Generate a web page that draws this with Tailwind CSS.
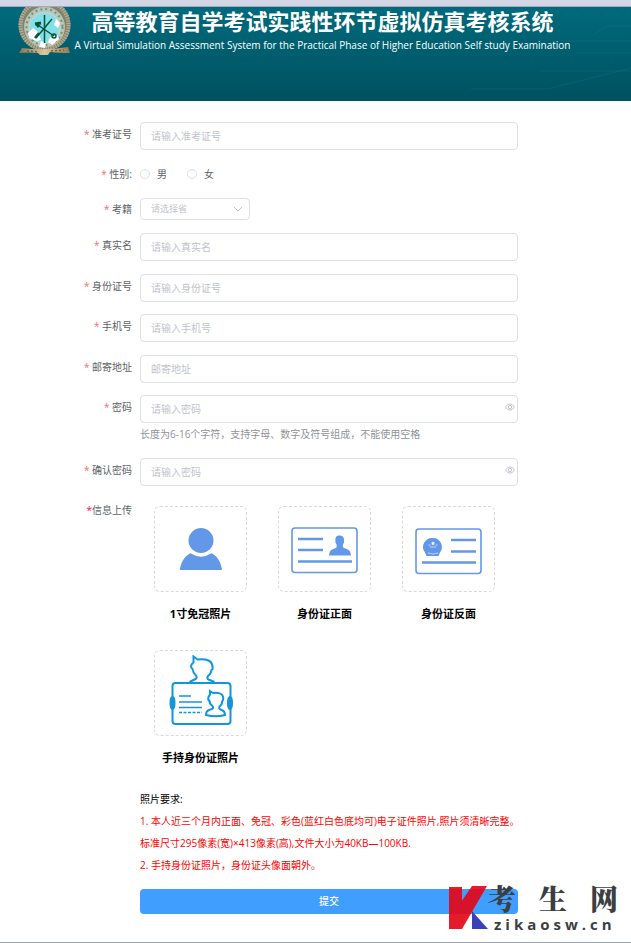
<!doctype html>
<html lang="zh-CN">

<head>
    <title>高等教育自学考试实践性环节虚拟仿真考核系统</title>
    <meta charset="utf-8">
    <meta name="viewport" content="width=device-width, initial-scale=1">
    <script src="https://cdn.jsdelivr.net/npm/@tailwindcss/browser@4"></script>
</head>

<body class="relative bg-white font-['Open_Sans','Noto_Sans_CJK_SC',sans-serif] text-[10px] text-[#606266]">

<div class="h-[7px] border-b border-[#a5a8ba] bg-[#d3d6e5]"></div>

<header class="relative h-[94px] overflow-hidden bg-linear-to-b from-[#006a7c] to-[#00515f] text-white">
    <!-- faint circuit lines -->
    <svg class="absolute top-0 right-0" width="180" height="94" viewBox="0 0 180 94" fill="none" stroke="#1b8294" stroke-opacity=".25">
        <path d="M20 82H96L180 61M90 64H180M110 34H180M125 46H180M142 28l14-9h24"/>
        <path d="M60 55H180M85 8H180" stroke-dasharray="2 8"/>
    </svg>
    <!-- emblem -->
    <svg class="absolute top-0 left-[18px]" width="54" height="49" viewBox="0 0 54 49">
        <defs>
            <linearGradient id="gold" x1="0" y1="0" x2="1" y2="0">
                <stop offset="0" stop-color="#8a7350"/>
                <stop offset=".5" stop-color="#dcc7a2"/>
                <stop offset="1" stop-color="#94774f"/>
            </linearGradient>
        </defs>
        <circle cx="26.500" cy="18" r="26" fill="#7f8370"/>
        <circle cx="26.500" cy="18" r="24" fill="none" stroke="#b3ab8e" stroke-width="4" stroke-dasharray="1.500 1"/>
        <circle cx="26.500" cy="20" r="20" fill="#b4c9c0" stroke="#c9bc98"/>
        <circle cx="26.500" cy="20" r="18" fill="none" stroke="#6b918a" stroke-width="2" stroke-dasharray="2 3"/>
        <circle cx="26.500" cy="21" r="15.500" fill="#82e0ea" stroke="#d9d5b8"/>
        <path d="M10 26l5-5 5 4 3 8-4 1-8-3zM32 30l8-2 1 4-7 6-4-3zM23 34l5 2-1 5-6-1zM38 12l4 4-2 5-4-3z" fill="#fff"/>
        <g stroke="#0b5536" fill="none">
            <path d="M26.500 8v28" stroke-width="1.500"/>
            <path d="M34 12L18 31M20 18l16 11" stroke-width="1.500"/>
            <path d="M17 17l6-1M18 16l3 4" stroke-width="3"/>
            <path d="M21 26l-4 5" stroke-width="2.500"/>
            <circle cx="36" cy="29" r="2" stroke-width="1.500"/>
        </g>
        <path d="M4 41q22 3 46-1l2 6q-8 0-20-1l-2 3h-8l-2-2q-10-1-19 0z" fill="url(#gold)"/>
        <path d="M9 44l12 1M33 44l13-1" stroke="#7b5c38" stroke-width="1.500" stroke-dasharray="2 2"/>
    </svg>
    <div class="pl-[14px] text-center">
        <h1 class="text-[22px] leading-7 font-bold">高等教育自学考试实践性环节虚拟仿真考核系统</h1>
        <p class="text-[10px] leading-5 font-medium whitespace-nowrap">A Virtual Simulation Assessment System for the Practical Phase of Higher Education Self study Examination</p>
    </div>
</header>

<form class="border-b border-[#9ba3ad] pt-[21px] pr-[113px] pb-7 pl-[72px]">
    <div class="mb-3 flex">
        <label for="ticket" class="w-[60px] shrink-0 text-right leading-6"><span class="text-[#f56c6c]">*</span> 准考证号</label>
        <input id="ticket" type="text" placeholder="请输入准考证号" class="ml-2 h-7 min-w-0 flex-1 rounded-sm border border-[#dcdfe6] px-[10px] placeholder:text-[#c0c4cc]">
    </div>

    <div class="mb-3 flex leading-6" role="radiogroup" aria-labelledby="gender">
        <span id="gender" class="w-[60px] shrink-0 text-right"><span class="text-[#f56c6c]">*</span> 性别:</span>
        <label class="ml-2 flex items-center gap-[7px]"><input type="radio" name="gender" class="size-[10px] appearance-none rounded-full border border-[#dcdfe6] checked:bg-[#409eff]">男</label>
        <label class="ml-5 flex items-center gap-[7px]"><input type="radio" name="gender" class="size-[10px] appearance-none rounded-full border border-[#dcdfe6] checked:bg-[#409eff]">女</label>
    </div>

    <div class="mb-[13px] flex">
        <label for="province" class="w-[60px] shrink-0 text-right leading-[22px]"><span class="text-[#f56c6c]">*</span> 考籍</label>
        <div class="relative ml-2 w-[110px]">
            <select id="province" class="block h-[22px] w-full appearance-none rounded-sm border border-[#dcdfe6] px-[10px] text-[9px] text-[#c0c4cc]">
                <option>请选择省</option>
            </select>
            <svg class="pointer-events-none absolute top-[7px] right-2" width="8" height="8" viewBox="0 0 8 8" fill="none" stroke="#c0c4cc"><path d="M0 2l4 4 4-4"/></svg>
        </div>
    </div>

    <div class="mb-[13px] flex">
        <label for="name" class="w-[60px] shrink-0 text-right leading-6"><span class="text-[#f56c6c]">*</span> 真实名</label>
        <input id="name" type="text" placeholder="请输入真实名" class="ml-2 h-7 min-w-0 flex-1 rounded-sm border border-[#dcdfe6] px-[10px] placeholder:text-[#c0c4cc]">
    </div>

    <div class="mb-3 flex">
        <label for="idcard" class="w-[60px] shrink-0 text-right leading-6"><span class="text-[#f56c6c]">*</span> 身份证号</label>
        <input id="idcard" type="text" placeholder="请输入身份证号" class="ml-2 h-7 min-w-0 flex-1 rounded-sm border border-[#dcdfe6] px-[10px] placeholder:text-[#c0c4cc]">
    </div>

    <div class="mb-[13px] flex">
        <label for="phone" class="w-[60px] shrink-0 text-right leading-6"><span class="text-[#f56c6c]">*</span> 手机号</label>
        <input id="phone" type="tel" placeholder="请输入手机号" class="ml-2 h-7 min-w-0 flex-1 rounded-sm border border-[#dcdfe6] px-[10px] placeholder:text-[#c0c4cc]">
    </div>

    <div class="mb-3 flex">
        <label for="address" class="w-[60px] shrink-0 text-right leading-6"><span class="text-[#f56c6c]">*</span> 邮寄地址</label>
        <input id="address" type="text" placeholder="邮寄地址" class="ml-2 h-7 min-w-0 flex-1 rounded-sm border border-[#dcdfe6] px-[10px] placeholder:text-[#c0c4cc]">
    </div>

    <div class="mb-[13px] flex">
        <label for="password" class="w-[60px] shrink-0 text-right leading-6"><span class="text-[#f56c6c]">*</span> 密码</label>
        <div class="relative ml-2 flex-1">
            <input id="password" type="password" placeholder="请输入密码" class="block h-7 w-full rounded-sm border border-[#dcdfe6] px-[10px] placeholder:text-[#c0c4cc]">
            <button type="button" aria-label="显示密码" class="absolute top-[7px] right-[3px]">
                <svg width="10" height="10" viewBox="0 0 10 10" fill="none" stroke="#c0c4cc"><path d="M.5 5Q2.500 1.800 5 1.800T9.500 5Q7.500 8.200 5 8.200T.5 5z"/><circle cx="5" cy="5" r="1.700"/></svg>
            </button>
            <p class="leading-[22px] text-[#909399]">长度为6-16个字符，支持字母、数字及符号组成，不能使用空格</p>
        </div>
    </div>

    <div class="mb-3 flex">
        <label for="confirm" class="w-[60px] shrink-0 text-right leading-6"><span class="text-[#f56c6c]">*</span> 确认密码</label>
        <div class="relative ml-2 flex-1">
            <input id="confirm" type="password" placeholder="请输入密码" class="block h-7 w-full rounded-sm border border-[#dcdfe6] px-[10px] placeholder:text-[#c0c4cc]">
            <button type="button" aria-label="显示密码" class="absolute top-[7px] right-[3px]">
                <svg width="10" height="10" viewBox="0 0 10 10" fill="none" stroke="#c0c4cc"><path d="M.5 5Q2.500 1.800 5 1.800T9.500 5Q7.500 8.200 5 8.200T.5 5z"/><circle cx="5" cy="5" r="1.700"/></svg>
            </button>
        </div>
    </div>

    <div class="flex">
        <span class="w-[60px] shrink-0 text-right leading-6"><span class="text-[#ff0040]">*</span>信息上传</span>
        <div class="ml-2 min-w-0 flex-1">
            <div class="flex flex-wrap gap-x-[31px] gap-y-6 pt-2 pl-[14px] text-[11px] leading-6 font-bold text-black">
                <label class="relative w-[93px] text-center">
                    <input type="file" class="sr-only">
                    <span class="mb-[10px] flex h-[86px] items-center justify-center rounded-md border border-dashed border-[#d9d9d9]">
                        <svg width="44" height="44" viewBox="0 0 44 44" fill="#6398e9"><circle cx="22" cy="13.500" r="12.500"/><path d="M.8 43C2 34.500 6 29 11.500 26.300Q22 33 32.500 26.300C38 29 42 34.500 43 43z"/></svg>
                    </span>
                    1寸免冠照片
                </label>
                <label class="relative w-[93px] text-center">
                    <input type="file" class="sr-only">
                    <span class="mb-[10px] flex h-[86px] items-center justify-center rounded-md border border-dashed border-[#d9d9d9] pt-[2px]">
                        <svg width="67" height="47" viewBox="0 0 67 47"><rect x="1" y="1" width="65" height="44.500" rx="3" fill="none" stroke="#6398e9" stroke-width="1.600"/><path d="M7 12h25M7 23h25M7 34.500h54" stroke="#6398e9" stroke-width="2.400"/><path d="M48.500 8.500c3.500 0 4.800 2.200 4.500 5 .5 1.500-.3 3-1 3.700-.5 3 .3 3.500 2.500 4.300 3.500 1.200 5 2.500 5.500 7H38c.5-4.500 2-5.800 5.500-7 2.200-.8 2.500-1.300 2-4.300-.8-.7-1.500-2.200-1-3.700-.3-2.800.5-5 4-5z" fill="#6398e9"/></svg>
                    </span>
                    身份证正面
                </label>
                <label class="relative w-[93px] text-center">
                    <input type="file" class="sr-only">
                    <span class="mb-[10px] flex h-[86px] items-center justify-center rounded-md border border-dashed border-[#d9d9d9] pt-1">
                        <svg width="67" height="47" viewBox="0 0 67 47"><rect x="1" y="1" width="65" height="44.500" rx="3" fill="none" stroke="#6398e9" stroke-width="1.600"/><path d="M36 12h25M36 23.500h25M7 34.500h54" stroke="#6398e9" stroke-width="2.400"/><path d="M18 10a9 9 0 0 1 7 14.500l-1.500 3.500h-12L10 24.500A9 9 0 0 1 18 10z" fill="#6398e9"/><path d="M18 13.200l.6 1.300 1.400.2-1 1 .2 1.400-1.200-.7-1.200.7.200-1.400-1-1 1.400-.2z" fill="#fff"/><path d="M13.500 17h2M20.500 17h2M15 19h6M13 25q5 2 10 0" fill="none" stroke="#fff" stroke-width=".6"/></svg>
                    </span>
                    身份证反面
                </label>
                <label class="relative w-[93px] text-center">
                    <input type="file" class="sr-only">
                    <span class="mb-[10px] flex h-[86px] items-start justify-center rounded-md border border-dashed border-[#d9d9d9] pt-1">
                        <svg width="64" height="71" viewBox="0 0 64 71" fill="none" stroke="#1296db" stroke-width="2">
                            <rect x="3.500" y="28" width="58" height="41" rx="3"/>
                            <path d="M20.500 27l6-3q2-1 .5-3.500-3-2.500-3.500-6.500-1.500-1-1.500-3 .5-2 2.500-3.500V1.500l4 3q6-1 11 1 4 2 4 6.500.5 3-1 3-.5 4-3.500 6-1.500 2.500.5 3.500l6 2.500"/>
                            <path d="M37 60c0-4 2-5 6-6q2-1 .5-3-3-2-3-5-2-1-1-4l1.500-2.500V36l3 2q5-1 8 1 3 2 2 6l-1 2q0 3-2.500 4.500-1 2.500 1 3c3 .8 4.500 2 4.500 5.500q-9 2.500-19 0z"/>
                            <path d="M10 41h12M10 47h23M10 52.500h23" stroke-width="1.500"/>
                            <path d="M10 57.500h23" stroke-width="1.500" stroke-dasharray="3 1.500"/>
                            <ellipse cx="3.500" cy="48" rx="2" ry="6" fill="#1296db"/>
                            <ellipse cx="61" cy="48" rx="2" ry="6" fill="#1296db"/>
                        </svg>
                    </span>
                    手持身份证照片
                </label>
            </div>

            <div class="mt-[18px] leading-[22px] text-[#ff0000]">
                <p class="text-black">照片要求:</p>
                <p class="whitespace-nowrap">1. 本人近三个月内正面、免冠、彩色(蓝红白色底均可)电子证件照片,照片须清晰完整。</p>
                <p>标准尺寸295像素(宽)×413像素(高),文件大小为40KB—100KB.</p>
                <p>2. 手持身份证照片，身份证头像面朝外。</p>
            </div>

            <button type="submit" class="mt-[13px] block h-[25px] w-full rounded-sm bg-[#409eff] font-medium text-white">提交</button>
        </div>
    </div>
</form>

<!-- site mark over the bottom corner -->
<div class="pointer-events-none absolute right-[13px] bottom-[11px] flex h-[46px] text-[#3b3f42]">
    <svg width="39" height="44" viewBox="0 0 39 44"><path d="M0 1h13v14L23 0h15L13 43H0z" fill="#e51a2b"/><path d="M0 3h13v12l8-12h15L21 28H0z" fill="#d5132a"/><path d="M23 25l16 18H23z" fill="#3b3fb8"/></svg>
    <div class="w-[130px]">
        <div class="flex justify-between font-['Noto_Serif_CJK_SC','Noto_Sans_CJK_SC',serif] text-[28px] leading-6 font-black"><span>考</span><span>生</span><span>网</span></div>
        <div class="pt-1 pl-[6px] text-[15px] leading-5 font-bold tracking-[4px]">zikaosw.cn</div>
    </div>
</div>

</body>

</html>
